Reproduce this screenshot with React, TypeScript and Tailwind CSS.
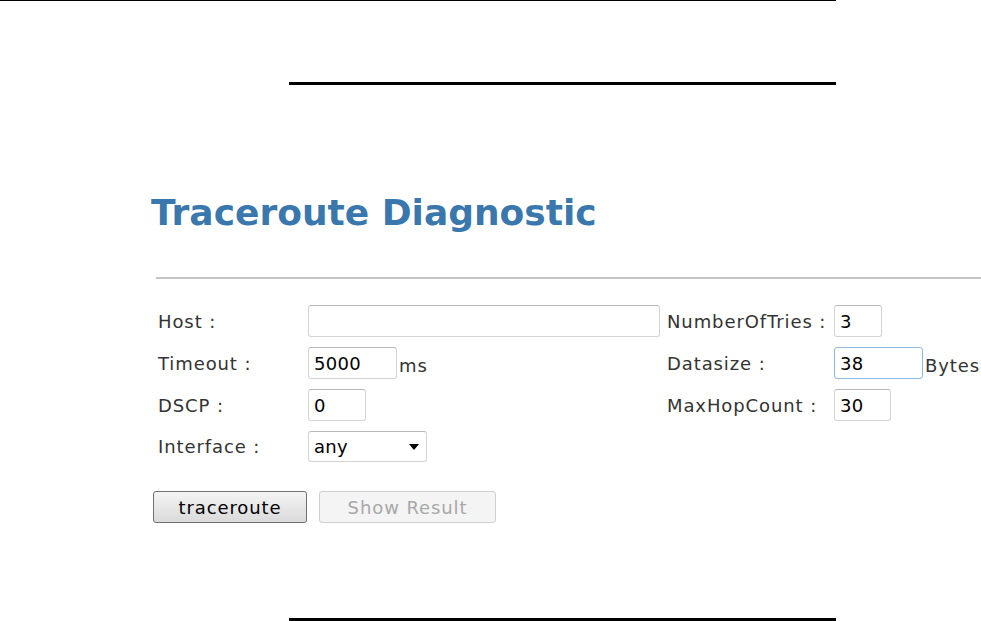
import React from "react";

const font = { fontFamily: '"DejaVu Sans", Verdana, sans-serif' };

function Label({ children }: { children: React.ReactNode }) {
  return <div className="flex items-center text-[18px] tracking-[0.9px] text-[#333]">{children}</div>;
}

function Field({ value, width, focused }: { value: string; width: string; focused?: boolean }) {
  return (
    <input
      readOnly
      value={value}
      className={`${width} h-[32px] rounded-[3px] border bg-white px-[5px] text-[18px] tracking-[0.3px] text-black outline-none ${
        focused ? "border-[#8fb8e0]" : "border-[#d4d4d4] border-t-[#b8b8b8]"
      }`}
    />
  );
}

export default function App() {
  return (
    <div className="min-h-[621px] w-[981px] overflow-hidden bg-white" style={font}>
      <div className="h-px w-[836px] bg-black" />
      <div className="ml-[289px] mt-[81px] h-[3px] w-[547px] bg-black" />

      <h1 className="ml-[151px] mt-[108px] text-[36px] font-bold leading-[40px] text-[#3a77ad]">
        Traceroute Diagnostic
      </h1>

      <div className="ml-[156px] mt-[44px] h-[2px] bg-[#c4c4c4]" />

      <div className="ml-[158px] mt-[26px] grid grid-cols-[150px_359px_167px_auto] gap-y-[10px]">
        <Label>Host :</Label>
        <div>
          <Field value="" width="w-[352px]" />
        </div>
        <Label>NumberOfTries :</Label>
        <div>
          <Field value="3" width="w-[48px]" />
        </div>

        <Label>Timeout :</Label>
        <div className="flex items-end">
          <Field value="5000" width="w-[89px]" />
          <span className="ml-[2px] text-[18px] tracking-[0.9px] text-[#333]">ms</span>
        </div>
        <Label>Datasize :</Label>
        <div className="flex items-end">
          <Field value="38" width="w-[89px]" focused />
          <span className="ml-[2px] text-[18px] tracking-[0.9px] text-[#333]">Bytes</span>
        </div>

        <Label>DSCP :</Label>
        <div>
          <Field value="0" width="w-[58px]" />
        </div>
        <Label>MaxHopCount :</Label>
        <div>
          <Field value="30" width="w-[57px]" />
        </div>

        <Label>Interface :</Label>
        <div className="relative w-[119px]">
          <select className="h-[31px] w-[119px] appearance-none rounded-[3px] border border-[#d4d4d4] border-t-[#b8b8b8] bg-white px-[5px] text-[18px] tracking-[0.3px] text-black outline-none">
            <option>any</option>
          </select>
          <svg className="pointer-events-none absolute right-[8px] top-[13px]" width="10" height="6" viewBox="0 0 10 6">
            <path d="M0 0h10L5 6z" fill="#000" />
          </svg>
        </div>
        <div />
        <div />
      </div>

      <div className="ml-[153px] mt-[29px] flex gap-[12px]">
        <button className="h-[32px] w-[154px] rounded-[3px] border border-[#707070] bg-gradient-to-b from-[#f4f4f4] to-[#dadada] text-[18px] tracking-[0.9px] text-black">
          traceroute
        </button>
        <button
          disabled
          className="h-[32px] w-[177px] rounded-[3px] border border-[#cfcfcf] bg-[#f4f4f4] text-[18px] tracking-[0.9px] text-[#a8a8a8]"
        >
          Show Result
        </button>
      </div>

      <div className="ml-[289px] mt-[95px] h-[3px] w-[547px] bg-black" />
    </div>
  );
}
